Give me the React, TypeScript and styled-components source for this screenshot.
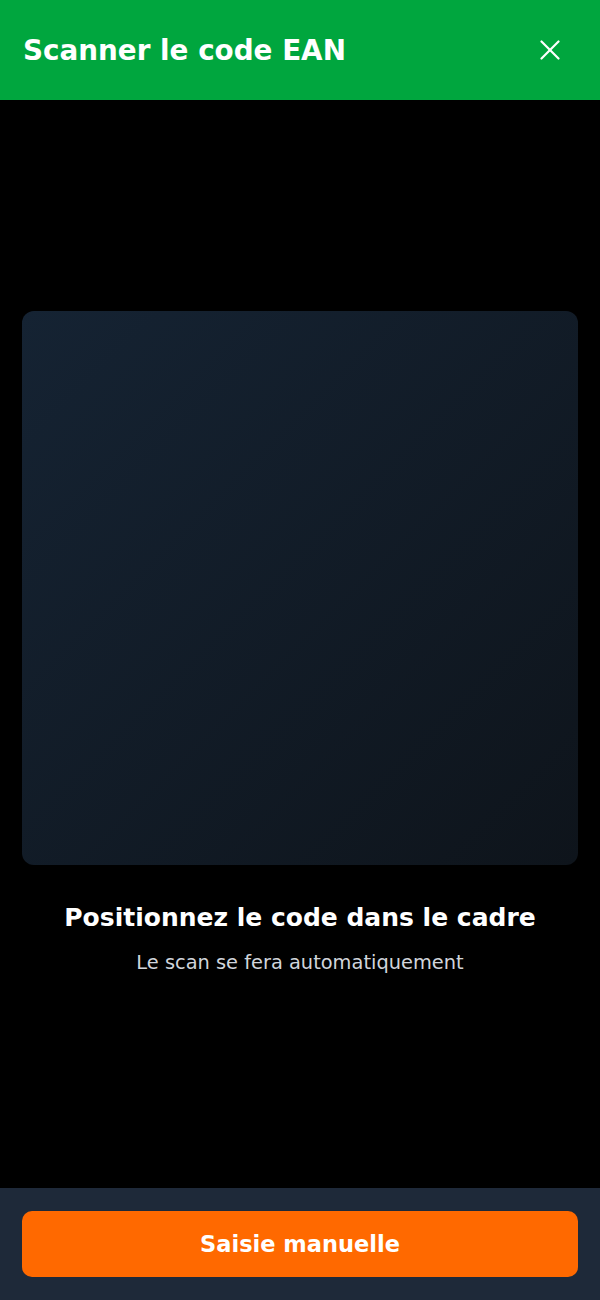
import React from "react"
import styled, { createGlobalStyle } from "styled-components"

const GlobalStyle = createGlobalStyle`
  html, body {
    margin: 0;
    padding: 0;
    background: #000000;
    font-family: "DejaVu Sans", Verdana, sans-serif;
  }
  * {
    box-sizing: border-box;
  }
`

const Screen = styled.div`
  display: flex;
  flex-direction: column;
  width: 600px;
  height: 1300px;
  background: #000000;
  color: #ffffff;
`

const Header = styled.header`
  display: flex;
  align-items: center;
  justify-content: space-between;
  height: 100px;
  padding: 0 40px 0 23px;
  background: #00a63e;
  flex-shrink: 0;
`

const Title = styled.h1`
  margin: 0;
  font-size: 27.8px;
  font-weight: 700;
  color: #ffffff;
`

const CloseButton = styled.button`
  display: flex;
  align-items: center;
  justify-content: center;
  width: 20px;
  height: 20px;
  padding: 0;
  border: none;
  background: transparent;
  color: #ffffff;
  cursor: pointer;
`

const Main = styled.main`
  flex: 1;
  display: flex;
  flex-direction: column;
  justify-content: center;
  padding: 0 22px 3px;
`

const Viewfinder = styled.div`
  width: 100%;
  height: 554px;
  border-radius: 12px;
  background: linear-gradient(to bottom right, #152333, #0e141b);
`

const Hint = styled.div`
  display: flex;
  flex-direction: column;
  align-items: center;
  margin-top: 38px;
  text-align: center;
`

const HintTitle = styled.h2`
  margin: 0;
  font-size: 25px;
  font-weight: 700;
  color: #ffffff;
`

const HintText = styled.p`
  margin: 19px 0 0;
  font-size: 19.4px;
  color: #d1d5dc;
`

const Footer = styled.footer`
  flex-shrink: 0;
  padding: 23px 22px;
  background: #1e2939;
`

const ManualButton = styled.button`
  display: flex;
  align-items: center;
  justify-content: center;
  width: 100%;
  height: 66px;
  border: none;
  border-radius: 10px;
  background: #ff6900;
  color: #ffffff;
  font-family: inherit;
  font-size: 22.5px;
  font-weight: 700;
  cursor: pointer;
`

const XIcon = () => (
  <svg width="20" height="20" viewBox="0 0 20 20" fill="none" stroke="currentColor" strokeWidth="2.2" strokeLinecap="round">
    <path d="M1.5 1.5 18.5 18.5" />
    <path d="M18.5 1.5 1.5 18.5" />
  </svg>
)

export default function App() {
  return (
    <>
      <GlobalStyle />
      <Screen>
        <Header>
          <Title>Scanner le code EAN</Title>
          <CloseButton aria-label="Fermer">
            <XIcon />
          </CloseButton>
        </Header>
        <Main>
          <Viewfinder />
          <Hint>
            <HintTitle>Positionnez le code dans le cadre</HintTitle>
            <HintText>Le scan se fera automatiquement</HintText>
          </Hint>
        </Main>
        <Footer>
          <ManualButton>Saisie manuelle</ManualButton>
        </Footer>
      </Screen>
    </>
  )
}
